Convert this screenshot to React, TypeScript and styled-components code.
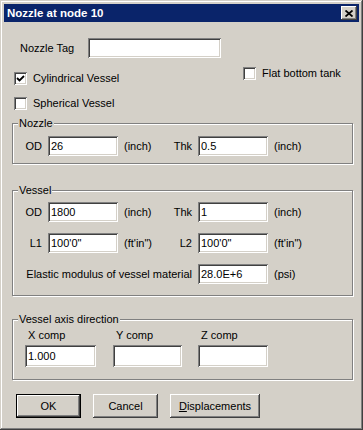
import * as React from 'react';
import styled, { createGlobalStyle, css } from 'styled-components';

const FACE = '#d4d0c8';
const SHADOW = '#808080';
const DARK = '#404040';
const TITLE_BLUE = '#0a246a';

const GlobalStyle = createGlobalStyle`
  html, body {
    margin: 0;
    padding: 0;
    background: ${FACE};
  }
  body {
    font-family: "Liberation Sans", Arial, sans-serif;
    font-size: 11px;
    color: #000;
  }
`;

const raised = css`
  box-shadow:
    inset -1px -1px 0 ${DARK},
    inset 1px 1px 0 #fff,
    inset -2px -2px 0 ${SHADOW},
    inset 2px 2px 0 ${FACE};
`;

const sunken = css`
  box-shadow:
    inset 1px 1px 0 ${SHADOW},
    inset -1px -1px 0 #fff,
    inset 2px 2px 0 ${DARK},
    inset -2px -2px 0 ${FACE};
`;

const Window = styled.div`
  width: 363px;
  height: 430px;
  box-sizing: border-box;
  padding: 4px;
  background: ${FACE};
  display: flex;
  flex-direction: column;
  box-shadow:
    inset -1px -1px 0 ${DARK},
    inset 1px 1px 0 ${FACE},
    inset -2px -2px 0 ${SHADOW},
    inset 2px 2px 0 #fff;
`;

const TitleBar = styled.div`
  height: 18px;
  background: ${TITLE_BLUE};
  display: flex;
  align-items: center;
  justify-content: space-between;
  padding: 0 2px 0 3px;
`;

const TitleText = styled.span`
  color: #fff;
  font-weight: bold;
  font-size: 11.5px;
  line-height: 18px;
`;

const CloseButton = styled.div`
  width: 16px;
  height: 14px;
  background: ${FACE};
  display: flex;
  align-items: center;
  justify-content: center;
  ${raised}
`;

const Body = styled.div`
  flex: 1;
  display: flex;
  flex-direction: column;
`;

const TagRow = styled.div`
  display: flex;
  align-items: center;
  margin-top: 16px;
  padding-left: 16px;
  height: 20px;
`;

const TagLabel = styled.span`
  width: 68px;
  line-height: 13px;
`;

const TextBox = styled.input<{ $width: number; $height?: number }>`
  width: ${(p) => p.$width}px;
  height: ${(p) => p.$height || 20}px;
  box-sizing: border-box;
  border: none;
  outline: none;
  margin: 0;
  padding: 0 3px;
  background: #fff;
  font-family: "Liberation Sans", Arial, sans-serif;
  font-size: 11px;
  color: #000;
  ${sunken}
`;

const CheckRow = styled.div<{ $top: number }>`
  display: flex;
  align-items: flex-start;
  margin-top: ${(p) => p.$top}px;
  padding-left: 10px;
`;

const CheckItem = styled.label<{ $offset?: number; $width?: number }>`
  display: flex;
  align-items: center;
  gap: 6px;
  height: 13px;
  margin-top: ${(p) => p.$offset || 0}px;
  width: ${(p) => (p.$width ? `${p.$width}px` : 'auto')};
`;

const CheckBox = styled.span`
  width: 13px;
  height: 13px;
  box-sizing: border-box;
  background: #fff;
  display: flex;
  align-items: center;
  justify-content: center;
  ${sunken}
`;

const CheckLabel = styled.span`
  line-height: 13px;
`;

const Group = styled.fieldset<{ $top: number; $pt: number; $pb: number }>`
  margin: ${(p) => p.$top}px 6px 0 8px;
  padding: ${(p) => p.$pt}px 0 ${(p) => p.$pb}px 0;
  min-width: 0;
  border: 1px solid ${SHADOW};
  box-shadow: inset 1px 1px 0 #fff, 1px 1px 0 #fff;
`;

const Legend = styled.legend`
  margin-left: 5px;
  padding: 0 1px;
  line-height: 13px;
  background: ${FACE};
`;

const FieldRow = styled.div<{ $gap?: number }>`
  display: flex;
  align-items: center;
  height: 20px;
  margin-top: ${(p) => p.$gap || 0}px;
`;

const FieldLabel = styled.span<{ $width: number }>`
  width: ${(p) => p.$width}px;
  box-sizing: border-box;
  padding-right: 6px;
  text-align: right;
  line-height: 13px;
  white-space: nowrap;
`;

const Unit = styled.span<{ $width?: number }>`
  width: ${(p) => (p.$width ? `${p.$width}px` : 'auto')};
  box-sizing: border-box;
  padding-left: 6px;
  line-height: 13px;
  white-space: nowrap;
`;

const AxisRow = styled.div`
  display: flex;
  padding-left: 12px;
`;

const AxisCol = styled.div<{ $width: number; $gap?: number }>`
  width: ${(p) => p.$width}px;
  margin-left: ${(p) => p.$gap || 0}px;
  display: flex;
  flex-direction: column;
  gap: 3px;
`;

const AxisLabel = styled.span`
  padding-left: 3px;
  line-height: 13px;
`;

const ButtonRow = styled.div`
  display: flex;
  gap: 12px;
  margin-top: 14px;
  padding-left: 12px;
`;

const Button = styled.button<{ $width: number; $default?: boolean }>`
  width: ${(p) => p.$width}px;
  height: 24px;
  box-sizing: border-box;
  margin: 0;
  padding: 0;
  background: ${FACE};
  font-family: "Liberation Sans", Arial, sans-serif;
  font-size: 11px;
  color: #000;
  border: ${(p) => (p.$default ? '1px solid #000' : 'none')};
  ${raised}

  u { text-decoration: underline; }
`;

const CloseGlyph = () => (
  <svg width="8" height="7" viewBox="0 0 8 7">
    <path d="M0.5 0.5 L7.5 6.5 M7.5 0.5 L0.5 6.5" stroke="#000" strokeWidth="1.8" />
  </svg>
);

const CheckGlyph = () => (
  <svg width="9" height="9" viewBox="0 0 9 9">
    <path d="M1 4 L3.5 6.5 L8 2" stroke="#000" strokeWidth="1.8" fill="none" />
  </svg>
);

const Check: React.FC<{ label: string; checked?: boolean; offset?: number; width?: number }> = ({
  label,
  checked,
  offset,
  width,
}) => (
  <CheckItem $offset={offset} $width={width}>
    <CheckBox>{checked ? <CheckGlyph /> : null}</CheckBox>
    <CheckLabel>{label}</CheckLabel>
  </CheckItem>
);

const axisFields = [
  { label: 'X comp', value: '1.000', width: 71, gap: 0 },
  { label: 'Y comp', value: '', width: 69, gap: 17 },
  { label: 'Z comp', value: '', width: 70, gap: 16 },
];

const App: React.FC = () => {
  return (
    <>
      <GlobalStyle />
      <Window>
        <TitleBar>
          <TitleText>Nozzle at node 10</TitleText>
          <CloseButton>
            <CloseGlyph />
          </CloseButton>
        </TitleBar>
        <Body>
          <TagRow>
            <TagLabel>Nozzle Tag</TagLabel>
            <TextBox $width={133} defaultValue="" />
          </TagRow>

          <CheckRow $top={9}>
            <Check label="Cylindrical Vessel" checked offset={5} width={229} />
            <Check label="Flat bottom tank" />
          </CheckRow>
          <CheckRow $top={12}>
            <Check label="Spherical Vessel" />
          </CheckRow>

          <Group $top={7} $pt={6} $pb={7}>
            <Legend>Nozzle</Legend>
            <FieldRow>
              <FieldLabel $width={35}>OD</FieldLabel>
              <TextBox $width={70} defaultValue="26" />
              <Unit $width={52}>(inch)</Unit>
              <FieldLabel $width={28}>Thk</FieldLabel>
              <TextBox $width={70} defaultValue="0.5" />
              <Unit>(inch)</Unit>
            </FieldRow>
          </Group>

          <Group $top={20} $pt={5} $pb={11}>
            <Legend>Vessel</Legend>
            <FieldRow>
              <FieldLabel $width={35}>OD</FieldLabel>
              <TextBox $width={70} defaultValue="1800" />
              <Unit $width={52}>(inch)</Unit>
              <FieldLabel $width={28}>Thk</FieldLabel>
              <TextBox $width={70} defaultValue="1" />
              <Unit>(inch)</Unit>
            </FieldRow>
            <FieldRow $gap={11}>
              <FieldLabel $width={35}>L1</FieldLabel>
              <TextBox $width={70} defaultValue={"100'0\""} />
              <Unit $width={52}>(ft'in")</Unit>
              <FieldLabel $width={28}>L2</FieldLabel>
              <TextBox $width={70} defaultValue={"100'0\""} />
              <Unit>(ft'in")</Unit>
            </FieldRow>
            <FieldRow $gap={11}>
              <FieldLabel $width={185}>Elastic modulus of vessel material</FieldLabel>
              <TextBox $width={70} defaultValue="28.0E+6" />
              <Unit>(psi)</Unit>
            </FieldRow>
          </Group>

          <Group $top={17} $pt={3} $pb={12}>
            <Legend>Vessel axis direction</Legend>
            <AxisRow>
              {axisFields.map((f) => (
                <AxisCol key={f.label} $width={f.width} $gap={f.gap}>
                  <AxisLabel>{f.label}</AxisLabel>
                  <TextBox $width={f.width} $height={22} defaultValue={f.value} />
                </AxisCol>
              ))}
            </AxisRow>
          </Group>

          <ButtonRow>
            <Button $width={65} $default>OK</Button>
            <Button $width={65}>Cancel</Button>
            <Button $width={90}>
              <u>D</u>isplacements
            </Button>
          </ButtonRow>
        </Body>
      </Window>
    </>
  );
};

export default App;
